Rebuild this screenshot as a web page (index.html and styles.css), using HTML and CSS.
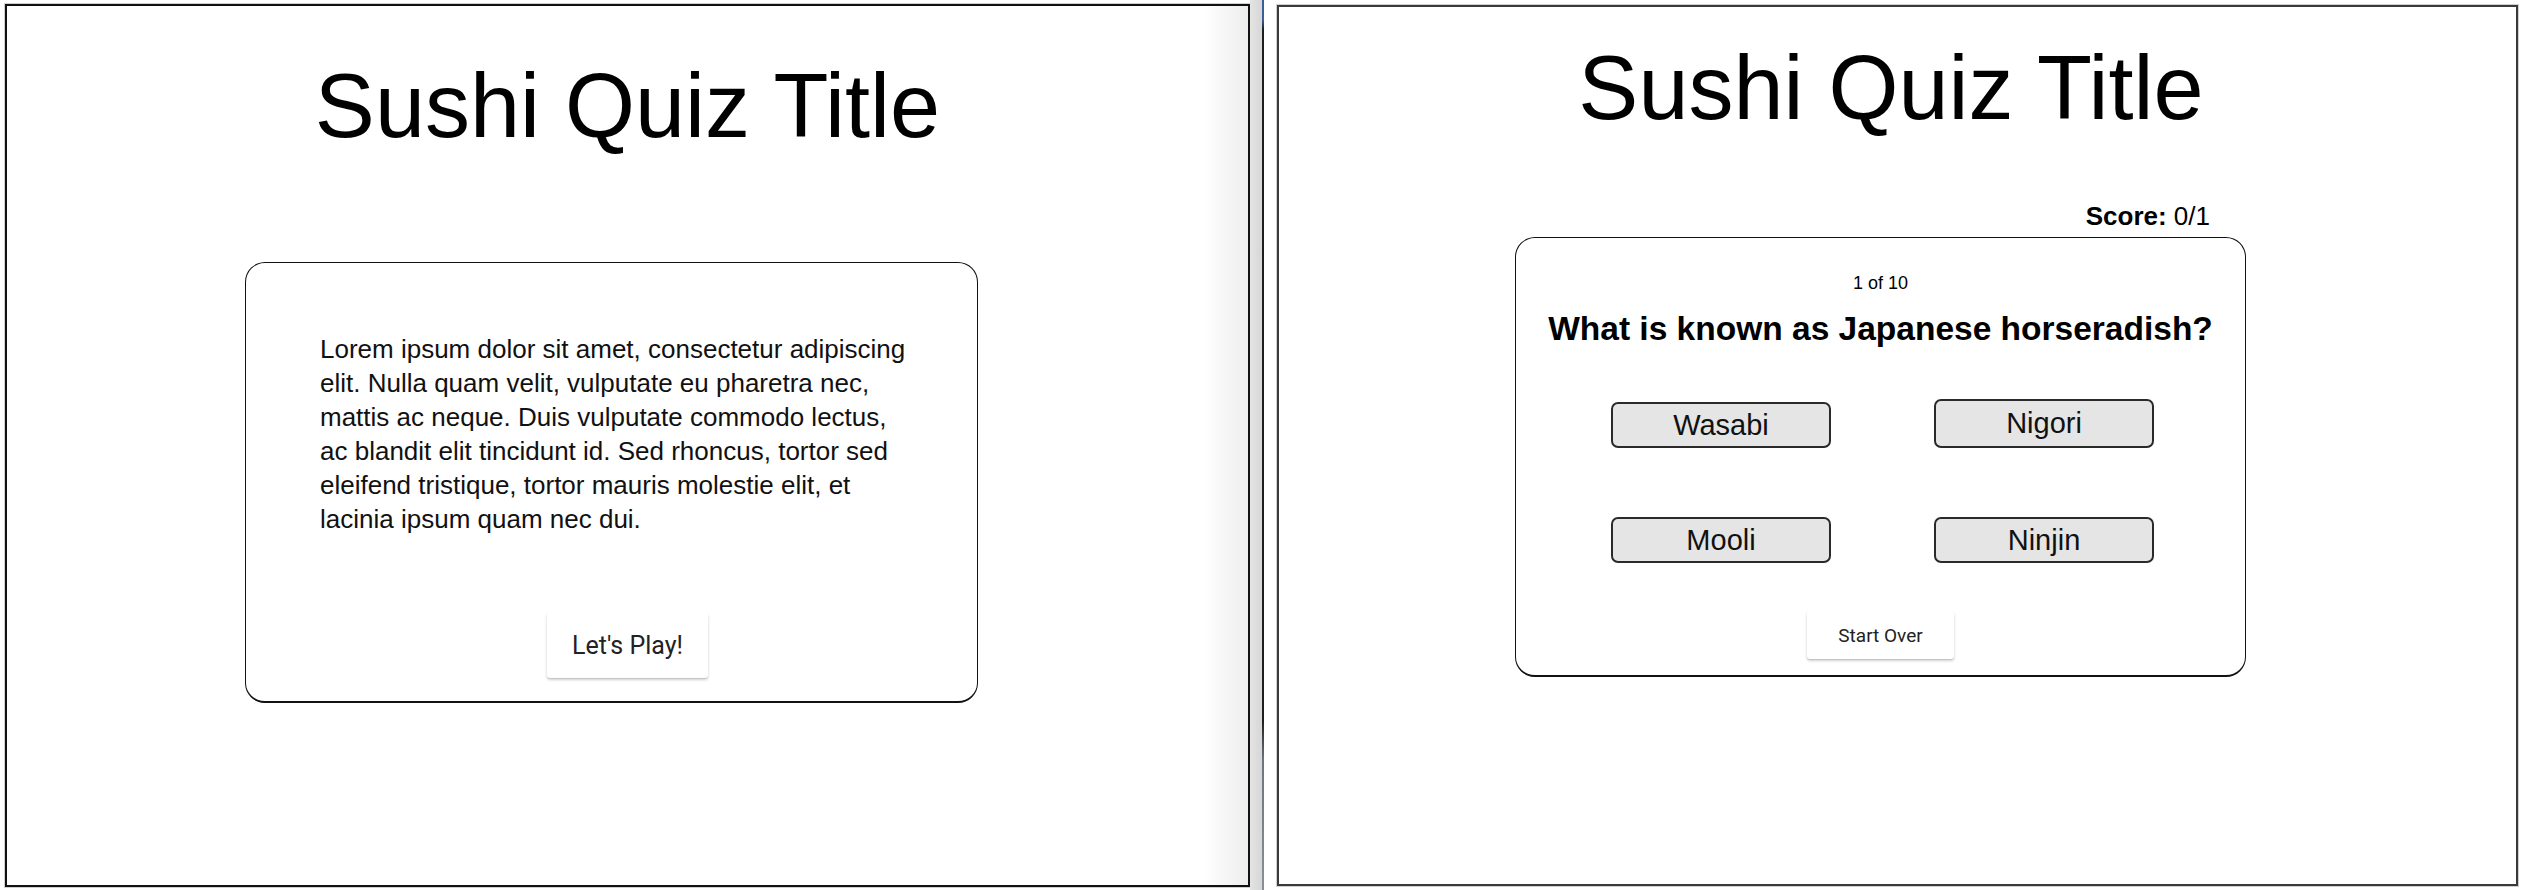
FILE: index.html
```html
<!DOCTYPE html>
<html lang="en">
<head>
<meta charset="utf-8">
<title>Sushi Quiz</title>
<link rel="stylesheet" href="styles.css">
</head>
<body>
<div class="screen">
  <section class="panel panel-left">
    <h1 class="title title-left">Sushi Quiz Title</h1>
    <div class="card card-intro">
      <p class="intro-text">Lorem ipsum dolor sit amet, consectetur adipiscing elit. Nulla quam velit, vulputate eu pharetra nec, mattis ac neque. Duis vulputate commodo lectus, ac blandit elit tincidunt id. Sed rhoncus, tortor sed eleifend tristique, tortor mauris molestie elit, et lacinia ipsum quam nec dui.</p>
      <div class="btn-row">
        <button class="flat-btn play-btn">Let's Play!</button>
      </div>
    </div>
  </section>
  <div class="divider">
    <div class="divider-gray"></div>
    <div class="divider-dark"></div>
    <div class="divider-gap"></div>
  </div>
  <section class="panel panel-right">
    <h1 class="title title-right">Sushi Quiz Title</h1>
    <div class="quiz-wrap">
      <div class="score"><b>Score:</b> 0/1</div>
      <div class="card card-quiz">
        <div class="counter">1 of 10</div>
        <h2 class="question">What is known as Japanese horseradish?</h2>
        <div class="answers">
          <button class="answer">Wasabi</button>
          <button class="answer answer-tall">Nigori</button>
          <button class="answer">Mooli</button>
          <button class="answer">Ninjin</button>
        </div>
        <div class="btn-row">
          <button class="flat-btn over-btn">Start Over</button>
        </div>
      </div>
    </div>
  </section>
</div>
</body>
</html>
```

FILE: styles.css
```css
* {
  box-sizing: border-box;
}

html, body {
  margin: 0;
  padding: 0;
  background: #ffffff;
}

body {
  width: 2524px;
  height: 890px;
  overflow: hidden;
  font-family: "Liberation Sans", Arial, Helvetica, sans-serif;
  color: #000;
}

.screen {
  display: flex;
  align-items: flex-start;
  height: 890px;
  padding-left: 5px;
}

.panel {
  display: flex;
  flex-direction: column;
  box-shadow: 0 0 0 1px #cfcfcf;
}

.panel-left {
  width: 1245px;
  height: 883px;
  margin-top: 4px;
  border: 2px solid #111;
  background: linear-gradient(90deg, #ffffff 0, #ffffff calc(100% - 45px), #ededed 100%);
}

.panel-right {
  width: 1241px;
  height: 881px;
  margin-top: 5px;
  border: 2px solid #3a3a3a;
  background: #ffffff;
}

.title {
  margin: 0;
  font-family: "Liberation Sans", Arial, Helvetica, sans-serif;
  font-weight: 400;
  font-size: 90px;
  line-height: 90px;
  text-align: center;
  color: #000;
}

.title-left {
  margin-top: 55px;
}

.title-right {
  margin-top: 36px;
  padding-right: 13px;
}

.card {
  border: 1px solid #111;
  border-bottom-width: 2px;
  border-radius: 20px;
  background: #fff;
}

.card-intro {
  width: 733px;
  height: 441px;
  margin-left: 238px;
  margin-top: 111px;
  padding: 69px 42px 24px 74px;
}

.intro-text {
  margin: 0;
  max-width: 600px;
  font-size: 26px;
  line-height: 34px;
  color: #111;
}

.btn-row {
  display: flex;
  justify-content: center;
}

.flat-btn {
  border: none;
  background: #fff;
  border-radius: 3px;
  font-family: Roboto, "Liberation Sans", sans-serif;
  color: #222;
  box-shadow: 0 2px 3px rgba(0, 0, 0, 0.18), 0 1px 1px rgba(0, 0, 0, 0.10);
  padding: 0;
}

.play-btn {
  width: 161px;
  height: 66px;
  margin-top: 76px;
  font-size: 25px;
}

.quiz-wrap {
  width: 731px;
  margin-left: 236px;
  margin-top: 68px;
  display: flex;
  flex-direction: column;
}

.score {
  font-size: 26px;
  line-height: 30px;
  text-align: right;
  padding-right: 36px;
}

.card-quiz {
  width: 731px;
  height: 440px;
  margin-top: 6px;
  padding: 34px 0 16px;
}

.counter {
  font-size: 18px;
  line-height: 22px;
  text-align: center;
}

.question {
  margin: 16px 0 0;
  font-size: 33.5px;
  line-height: 38px;
  font-weight: 700;
  text-align: center;
}

.answers {
  display: grid;
  grid-template-columns: 220px 220px;
  grid-auto-rows: 46px;
  column-gap: 103px;
  row-gap: 69px;
  justify-content: center;
  margin-top: 54px;
  padding-left: 4px;
}

.answer {
  height: 46px;
  border: 2px solid #2a2a2a;
  border-radius: 7px;
  background: #e5e5e5;
  font-family: "Liberation Sans", Arial, Helvetica, sans-serif;
  font-size: 29px;
  color: #111;
  padding: 0;
}

.answer-tall {
  height: 49px;
  margin-top: -3px;
}

.over-btn {
  width: 147px;
  height: 48px;
  margin-top: 48px;
  font-size: 19px;
}

.divider {
  display: flex;
  height: 890px;
}

.divider-gray {
  width: 12px;
  height: 890px;
  background: linear-gradient(90deg, #e4e4e4, #d6d6d6);
}

.divider-dark {
  width: 2px;
  height: 890px;
  background: linear-gradient(180deg, #3a5f95 0, #3a5f95 20px, #1d1d1d 30px, #1d1d1d 720px, #6d7480 760px, #8a8f96 100%);
}

.divider-gap {
  width: 13px;
  height: 890px;
  background: #fff;
}
```
